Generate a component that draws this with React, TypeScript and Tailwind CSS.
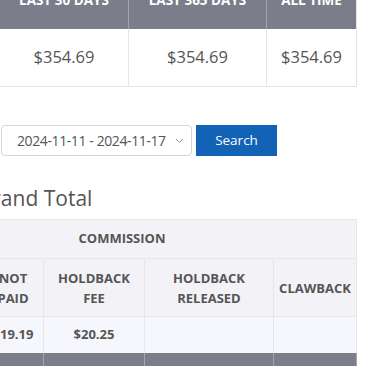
import React from "react";

export default function App() {
  const hdr = "bg-[#7c7d8b] text-white font-bold text-[13.5px] uppercase flex items-center justify-center h-[57px]";
  const body = "h-[58px] flex items-center justify-center text-[16.5px] text-[#555] border-b border-[#e4e4e4]";
  return (
    <div className="w-[375px] h-[366px] overflow-hidden bg-white font-['Open_Sans',sans-serif] text-[#555]">
      <div className="-mt-[28px] w-[357px] grid grid-cols-[129px_138px_90px]">
        <div className={`${hdr} border-r border-[#a3a4ae]`}>Last 30 Days</div>
        <div className={`${hdr} border-r border-[#a3a4ae]`}>Last 365 Days</div>
        <div className={`${hdr} border-r border-[#e4e4e4]`}>All Time</div>
        <div className={`${body} border-r`}>$354.69</div>
        <div className={`${body} border-r`}>$354.69</div>
        <div className={`${body} border-r`}>$354.69</div>
      </div>

      <div className="mt-[38px] flex items-center gap-[4px] pl-[1px]">
        <div className="w-[191px] h-[31px] border border-[#d6d6d6] rounded-[4px] flex items-center justify-between pl-[15px] pr-[7px] text-[14px] text-[#555]">
          <span className="tracking-[-0.4px]">2024-11-11 - 2024-11-17</span>
          <svg width="9" height="6" viewBox="0 0 9 6" fill="none" className="mt-[1px]">
            <path d="M1 1l3.5 3.5L8 1" stroke="#8a8a8a" strokeWidth="1" />
          </svg>
        </div>
        <button className="w-[81px] h-[31px] bg-[#1262b5] text-white text-[13.5px] flex items-center justify-center">
          Search
        </button>
      </div>

      <div className="mt-[26px] -ml-[23px] h-[32px] flex items-center text-[21px] text-[#555] leading-none">
        Grand Total
      </div>

      <div className="mt-[5px] -ml-[112px] w-[469px] border-t border-[#e6e6ec]">
        <div className="grid grid-cols-[95px_61px_101px_129px_83px]">
          <div className="col-span-5 h-[39px] bg-[#f3f3f7] border-r border-b border-[#e6e6ec] flex items-center justify-center text-[13px] font-bold text-[#555]">
            COMMISSION
          </div>
          {["", "NOT PAID", "HOLDBACK FEE", "HOLDBACK RELEASED", "CLAWBACK"].map((t, i) => (
            <div
              key={i}
              className="h-[58px] bg-[#f3f3f7] border-r border-b border-[#e6e6ec] flex items-center justify-center text-center text-[13px] font-bold leading-[20px] text-[#555] px-[6px]"
            >
              {t.split(" ").map((w, j) => (
                <React.Fragment key={j}>
                  {j > 0 && <br />}
                  {w}
                </React.Fragment>
              ))}
            </div>
          ))}
          {["", "$19.19", "$20.25", "", ""].map((t, i) => (
            <div
              key={i}
              className="h-[36px] bg-[#f6f6fd] border-r border-[#e6e6ec] flex items-center justify-center text-[13px] font-bold text-[#555]"
            >
              {t}
            </div>
          ))}
          {[0, 1, 2, 3, 4].map((i) => (
            <div key={i} className="h-[20px] bg-[#7c7d8b] border-r border-[#a3a4ae]" />
          ))}
        </div>
      </div>
    </div>
  );
}
